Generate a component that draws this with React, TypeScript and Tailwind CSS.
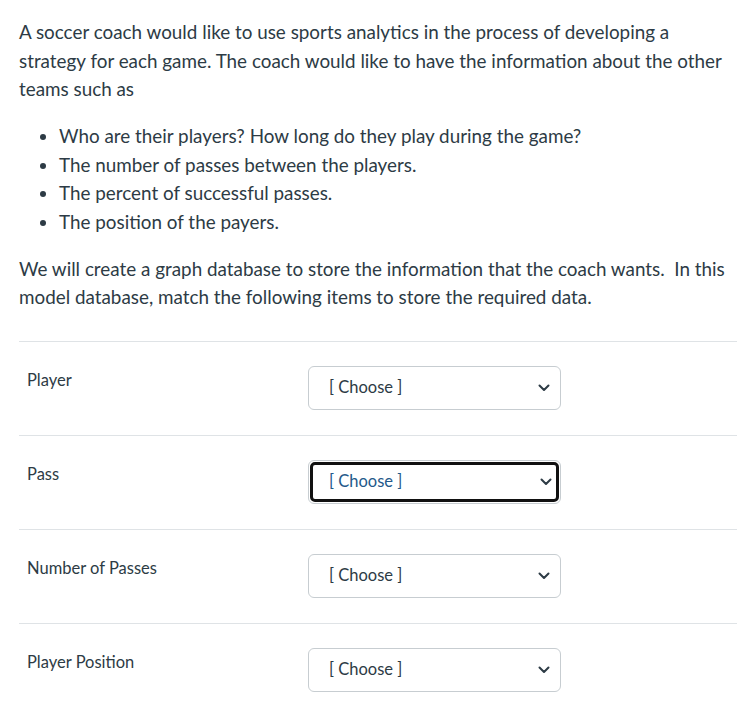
import React from 'react';

const rows = ['Player', 'Pass', 'Number of Passes', 'Player Position'];

const Chevron = () => (
  <svg width="12" height="8" viewBox="0 0 12 8" className="shrink-0">
    <path d="M1.5 1.5 L6 6 L10.5 1.5" fill="none" stroke="#2d3b45" strokeWidth="2" strokeLinecap="round" strokeLinejoin="round" />
  </svg>
);

const Select = ({ focused }: { focused?: boolean }) =>
  focused ? (
    <div className="w-[253px] h-[44px] rounded-[6px] border border-[#c7cdd1] p-px">
      <div className="w-full h-full rounded-[5px] border-[3px] border-[#111] flex items-center justify-between pl-[16px] pr-[4px]">
        <span className="text-[16.5px] text-[#24598a]">[ Choose ]</span>
        <Chevron />
      </div>
    </div>
  ) : (
    <div className="w-[253px] h-[44px] rounded-[6px] border border-[#c7cdd1] flex items-center justify-between pl-[20px] pr-[10px]">
      <span className="text-[16.5px] text-[#2d3b45]">[ Choose ]</span>
      <Chevron />
    </div>
  );

export default function App() {
  return (
    <div className="bg-white min-h-screen text-[#2d3b45] font-['Lato','Liberation_Sans',sans-serif] pl-[19px] pr-[7px] pt-[18px]">
      <div className="text-[18.85px] leading-[28.5px]">
        <p>
          A soccer coach would like to use sports analytics in the process of developing a strategy for each game. The coach would like to have the information about the other teams such as
        </p>
        <ul className="list-disc pl-[40px] my-[18.5px]">
          <li>Who are their players? How long do they play during the game?</li>
          <li>The number of passes between the players.</li>
          <li>The percent of successful passes.</li>
          <li>The position of the payers.</li>
        </ul>
        <p>
          We will create a graph database to store the information that the coach wants.&nbsp; In this model database, match the following items to store the required data.
        </p>
      </div>
      <div className="mt-[29px]">
        {rows.map((label, i) => (
          <div key={label} className="border-t border-[#dfe3e6] flex h-[94px] pt-[24px]">
            <div className="w-[289px] pl-[8px] pt-[2px] text-[16.5px]">{label}</div>
            <Select focused={i === 1} />
          </div>
        ))}
      </div>
    </div>
  );
}
